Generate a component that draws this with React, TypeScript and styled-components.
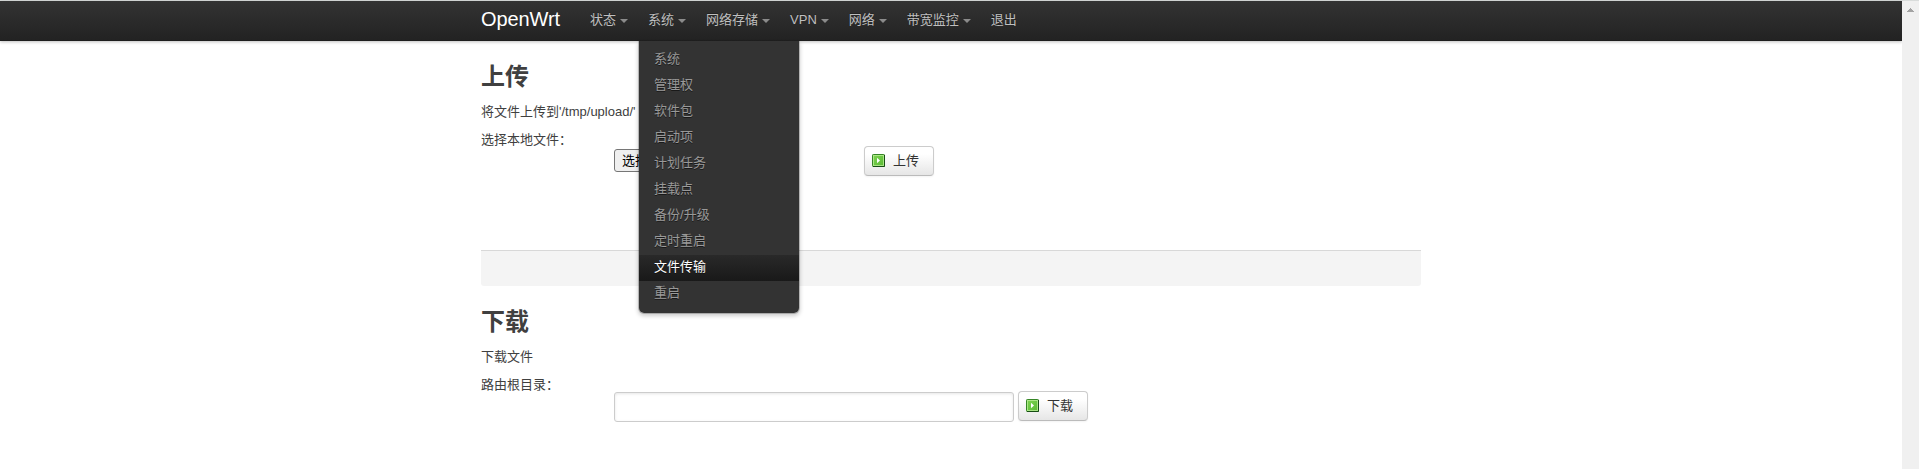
import React from "react";
import styled, { createGlobalStyle, css } from "styled-components";

const Global = createGlobalStyle`
  * { box-sizing: border-box; }
  html, body { margin: 0; background: #fff; overflow: hidden; }
  body, button, input { font-family: "Liberation Sans", "Noto Sans CJK SC", sans-serif; font-size: 13px; }
  body { color: #404040; line-height: 18px; }
`;

const Screen = styled.div`
  display: flex;
  height: 469px;
  border-top: 1px solid #d9dcdb;
`;

const Page = styled.div`
  flex: 1;
  min-width: 0;
`;

const Scrollbar = styled.div`
  width: 17px;
  padding-top: 7px;
  background: #f0f0f0;
  display: flex;
  justify-content: center;
  align-items: flex-start;
`;

const Header = styled.header`
  height: 40px;
  background: linear-gradient(#333, #222);
  box-shadow: 0 1px 3px rgba(0, 0, 0, 0.25), inset 0 -1px 0 rgba(0, 0, 0, 0.1);
`;

const Container = styled.div`
  width: 940px;
  margin: 0 auto;
`;

const Nav = styled(Container).attrs({ as: "nav" })`
  display: flex;
  height: 40px;
`;

const Brand = styled.span`
  width: 99px;
  font-size: 20px;
  line-height: 36px;
  letter-spacing: -0.1px;
  color: #fff;
  white-space: nowrap;
`;

const NavItem = styled.div`
  position: relative;
  display: flex;
  padding: 0 10px;
  line-height: 38px;
  color: #bfbfbf;
  white-space: nowrap;
  text-shadow: 0 -1px 0 rgba(0, 0, 0, 0.25);
`;

const Caret = styled.i`
  width: 8px;
  height: 4px;
  margin: 18px 0 0 4px;
  border-left: 4px solid transparent;
  border-right: 4px solid transparent;
  border-top: 4px solid #8b8b8b;
`;

const Menu = styled.ul`
  position: absolute;
  z-index: 5;
  top: 40px;
  left: 0;
  width: 162px;
  margin: 0;
  padding: 6px 0;
  list-style: none;
  background: #333;
  background-clip: padding-box;
  border: 1px solid rgba(0, 0, 0, 0.2);
  border-top: 0;
  border-radius: 0 0 6px 6px;
  box-shadow: 0 2px 4px rgba(0, 0, 0, 0.2);
`;

const MenuItem = styled.li<{ $active?: boolean }>`
  height: 26px;
  padding: 0 15px;
  line-height: 24px;
  color: #999;
  text-shadow: 0 1px 0 rgba(0, 0, 0, 0.5);
  ${(p) =>
    p.$active &&
    css`
      color: #fff;
      background: linear-gradient(#292929, #191919);
    `}
`;

const Section = styled.section`
  padding-top: 18px;
`;

const Title = styled.h2`
  margin: 0;
  font-size: 24px;
  line-height: 36px;
  font-weight: bold;
`;

const Description = styled.p`
  margin: 8px 0 10px;
`;

const Field = styled.div`
  display: flex;
  align-items: flex-start;
`;

const Label = styled.label`
  width: 133px;
  flex: none;
`;

const Controls = styled.div<{ $gap: number }>`
  display: flex;
  gap: ${(p) => p.$gap}px;
  padding-top: 15px;
`;

const FileSlot = styled.div`
  width: 250px;
  padding-top: 3px;
`;

const FileButton = styled.button`
  display: block;
  height: 23px;
  padding: 0 7px;
  line-height: 19px;
  color: #000;
  background: #efefef;
  border: 1px solid #767676;
  border-radius: 3px;
`;

const ActionButton = styled.button`
  display: flex;
  align-items: center;
  gap: 8px;
  width: 70px;
  height: 30px;
  padding: 0 0 0 7px;
  line-height: 18px;
  color: #333;
  background: linear-gradient(#fff 25%, #e6e6e6);
  border: 1px solid #ccc;
  border-bottom-color: #bbb;
  border-radius: 4px;
  box-shadow: 0 1px 2px rgba(0, 0, 0, 0.05);
`;

const PathInput = styled.input`
  width: 400px;
  height: 30px;
  margin-top: 1px;
  border: 1px solid #ccc;
  border-radius: 3px;
  box-shadow: inset 0 1px 3px rgba(0, 0, 0, 0.1);
`;

const Actions = styled.div`
  height: 36px;
  margin-top: 74px;
  background: #f4f4f4;
  border-top: 1px solid #d8d8d8;
  border-radius: 0 0 3px 3px;
`;

const Icon = styled.svg`
  margin-top: -1px;
`;

const PlayIcon = () => (
  <Icon width="13" height="13" viewBox="0 0 13 13">
    <defs>
      <linearGradient id="leaf" x1="0" y1="0" x2="1" y2="1">
        <stop offset="0" stopColor="#7fd552" />
        <stop offset="1" stopColor="#58b834" />
      </linearGradient>
    </defs>
    <rect x="0.5" y="0.5" width="12" height="12" rx="0.8" fill="url(#leaf)" stroke="#358526" />
    <path d="M12.5 1v11.5H1" fill="none" stroke="#174d14" />
    <rect x="1.5" y="1.5" width="10" height="10" fill="none" stroke="#b5eb92" strokeOpacity="0.85" />
    <path d="M5 3.8v5.4L8 6.5z" fill="#fff" />
  </Icon>
);

const entries = ["状态", "系统", "网络存储", "VPN", "网络", "带宽监控", "退出"];
const systemMenu = [
  "系统", "管理权", "软件包", "启动项", "计划任务",
  "挂载点", "备份/升级", "定时重启", "文件传输", "重启",
];

export default function App() {
  return (
    <>
      <Global />
      <Screen>
        <Page>
          <Header>
            <Nav>
              <Brand>OpenWrt</Brand>
              {entries.map((name, i) => (
                <NavItem key={name}>
                  {name}
                  {i < entries.length - 1 && <Caret />}
                  {i === 1 && (
                    <Menu>
                      {systemMenu.map((item) => (
                        <MenuItem key={item} $active={item === "文件传输"}>
                          {item}
                        </MenuItem>
                      ))}
                    </Menu>
                  )}
                </NavItem>
              ))}
            </Nav>
          </Header>
          <Container>
            <Section>
              <Title>上传</Title>
              <Description>将文件上传到'/tmp/upload/'</Description>
              <Field>
                <Label>选择本地文件：</Label>
                <Controls $gap={0}>
                  <FileSlot>
                    <FileButton>选择</FileButton>
                  </FileSlot>
                  <ActionButton><PlayIcon />上传</ActionButton>
                </Controls>
              </Field>
              <Actions />
            </Section>
            <Section>
              <Title>下载</Title>
              <Description>下载文件</Description>
              <Field>
                <Label>路由根目录：</Label>
                <Controls $gap={4}>
                  <PathInput />
                  <ActionButton><PlayIcon />下载</ActionButton>
                </Controls>
              </Field>
            </Section>
          </Container>
        </Page>
        <Scrollbar>
          <svg width="7" height="4" viewBox="0 0 7 4" shapeRendering="crispEdges">
            <path d="M3 0h1v1h1v1h1v1h1v1H0V3h1V2h1V1h1z" fill="#a3a3a3" />
          </svg>
        </Scrollbar>
      </Screen>
    </>
  );
}
